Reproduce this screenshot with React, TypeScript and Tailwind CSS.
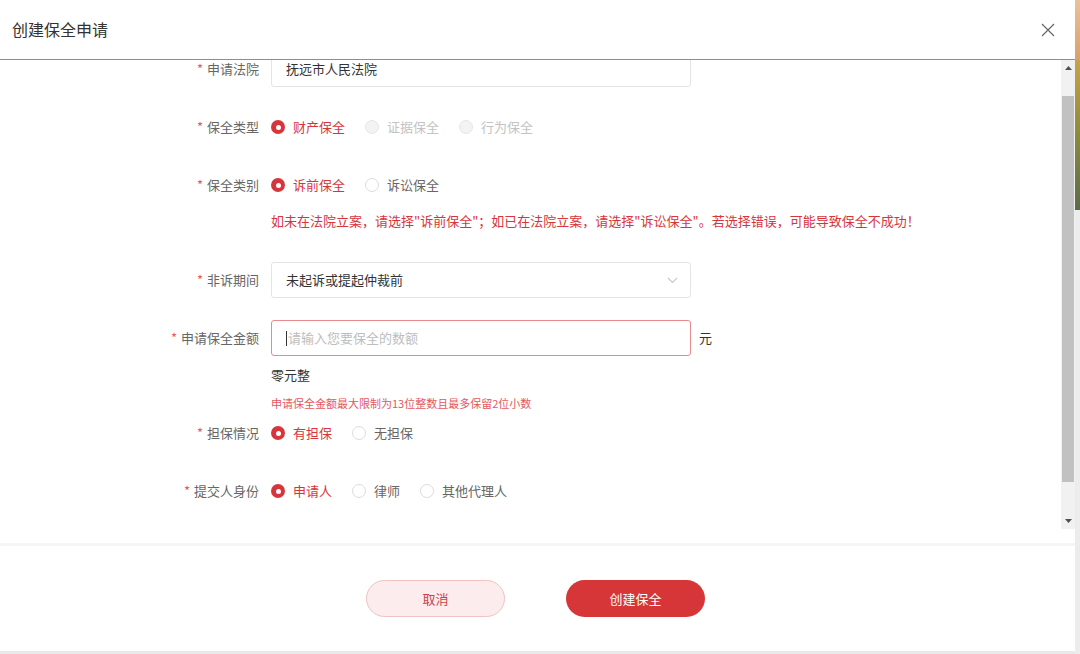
import React from "react";

function Radio({
  label,
  checked = false,
  disabled = false,
}: {
  label: string;
  checked?: boolean;
  disabled?: boolean;
}) {
  return (
    <label className="flex items-center gap-[8px] mr-[20px]">
      {checked ? (
        <span className="w-[14px] h-[14px] rounded-full bg-[#d8353b] flex items-center justify-center">
          <span className="w-[5px] h-[5px] rounded-full bg-white" />
        </span>
      ) : (
        <span
          className={
            disabled
              ? "w-[14px] h-[14px] rounded-full border border-[#e6e6e6] bg-[#f3f3f3]"
              : "w-[14px] h-[14px] rounded-full border border-[#dcdcdc] bg-white"
          }
        />
      )}
      <span
        className={
          checked
            ? "text-[13px] text-[#d8353b]"
            : disabled
            ? "text-[13px] text-[#c3c3c3]"
            : "text-[13px] text-[#666]"
        }
      >
        {label}
      </span>
    </label>
  );
}

function Row({
  label,
  children,
  className = "",
}: {
  label?: string;
  children: React.ReactNode;
  className?: string;
}) {
  return (
    <div className={"flex items-center " + className}>
      <div className="w-[259px] text-right text-[13px] text-[#666] shrink-0">
        {label && (
          <>
            <span className="text-[#e8585d] mr-[4px]">*</span>
            {label}
          </>
        )}
      </div>
      <div className="ml-[12px] flex items-center flex-1">{children}</div>
    </div>
  );
}

export default function App() {
  return (
    <div
      className="w-[1080px] h-[654px] flex bg-white overflow-hidden"
      style={{ fontFamily: '"Noto Sans CJK SC", "Noto Sans", sans-serif' }}
    >
      <div className="w-[1075px] h-full flex flex-col">
        {/* header */}
        <div className="h-[60px] flex items-center justify-between pl-[12px] pr-[20px] border-b border-[#e06a6f] shrink-0">
          <h1 className="text-[16px] text-[#333] mt-[-1px]">创建保全申请</h1>
          <svg width="14" height="14" viewBox="0 0 14 14">
            <path d="M1 1L13 13M13 1L1 13" stroke="#666" strokeWidth="1.2" fill="none" />
          </svg>
        </div>

        {/* scroll body */}
        <div className="h-[469px] flex shrink-0">
          <div className="flex-1 overflow-hidden">
            <div className="mt-[-9px]">
              <Row label="申请法院">
                <div className="w-[420px] h-[36px] border border-[#e4e4e4] rounded-[3px] px-[14px] flex items-center text-[13px] text-[#333]">
                  抚远市人民法院
                </div>
              </Row>
              <Row label="保全类型" className="mt-[22px] h-[36px]">
                <Radio label="财产保全" checked />
                <Radio label="证据保全" disabled />
                <Radio label="行为保全" disabled />
              </Row>
              <Row label="保全类别" className="mt-[22px] h-[36px]">
                <Radio label="诉前保全" checked />
                <Radio label="诉讼保全" />
              </Row>
              <Row className="mt-[8px] h-[20px]">
                <span className="text-[13px] text-[#d8353b]">
                  如未在法院立案，请选择"诉前保全"；如已在法院立案，请选择"诉讼保全"。若选择错误，可能导致保全不成功！
                </span>
              </Row>
              <Row label="非诉期间" className="mt-[31px]">
                <div className="w-[420px] h-[36px] border border-[#e4e4e4] rounded-[3px] pl-[14px] pr-[12px] flex items-center justify-between text-[13px] text-[#333]">
                  <span>未起诉或提起仲裁前</span>
                  <svg width="11" height="7" viewBox="0 0 11 7">
                    <path d="M1 1L5.5 5.5L10 1" stroke="#c8c8c8" strokeWidth="1.1" fill="none" />
                  </svg>
                </div>
              </Row>
              <Row label="申请保全金额" className="mt-[22px]">
                <div className="w-[420px] h-[36px] border border-[#e98a8d] rounded-[3px] pl-[14px] flex items-center text-[13px] text-[#bdbdbd]">
                  <span className="w-px h-[15px] bg-[#333] mr-[1px]" />
                  请输入您要保全的数额
                </div>
                <span className="ml-[8px] text-[13px] text-[#333]">元</span>
              </Row>
              <Row className="mt-[9px] h-[20px]">
                <span className="text-[13px] text-[#333]">零元整</span>
              </Row>
              <Row className="mt-[10px] h-[16px]">
                <span className="text-[11px] text-[#e4575c]">
                  申请保全金额最大限制为13位整数且最多保留2位小数
                </span>
              </Row>
              <Row label="担保情况" className="mt-[4px] h-[36px]">
                <Radio label="有担保" checked />
                <Radio label="无担保" />
              </Row>
              <Row label="提交人身份" className="mt-[22px] h-[36px]">
                <Radio label="申请人" checked />
                <Radio label="律师" />
                <Radio label="其他代理人" />
              </Row>
            </div>
          </div>
          {/* scrollbar */}
          <div className="w-[14px] bg-[#f1f1f1] flex flex-col items-center">
            <div className="h-[36px] w-full flex justify-center pt-[6px]">
              <svg width="7" height="4" viewBox="0 0 7 4">
                <path d="M0 4L3.5 0L7 4Z" fill="#505050" />
              </svg>
            </div>
            <div className="w-[12px] h-[386px] bg-[#c1c1c1]" />
            <div className="flex-1 w-full flex items-end justify-center pb-[6px]">
              <svg width="7" height="4" viewBox="0 0 7 4">
                <path d="M0 0L3.5 4L7 0Z" fill="#505050" />
              </svg>
            </div>
          </div>
        </div>

        {/* footer */}
        <div className="h-[14px] shrink-0" />
        <div className="h-[3px] bg-[#f5f5f5] shrink-0" />
        <div className="flex-1 flex items-start justify-center gap-[61px] pt-[34px] pr-[4px]">
          <button className="w-[139px] h-[37px] rounded-full border border-[#f0c2c4] bg-[#fdeced] text-[13px] text-[#c9434a]">
            取消
          </button>
          <button className="w-[139px] h-[37px] rounded-full bg-[#d63638] text-[13px] text-white">
            创建保全
          </button>
        </div>
        <div className="h-[3px] bg-[#e9e9e9] shrink-0" />
      </div>
      {/* page behind dialog */}
      <div className="w-[5px] h-full flex flex-col">
        <div className="h-[60px] bg-gradient-to-b from-[#e9c29a] to-[#d9a06a]" />
        <div className="h-[150px] bg-gradient-to-b from-[#c8a24a] via-[#8c8a3a] to-[#5b6b4a]" />
        <div className="flex-1 bg-[#ececec]" />
      </div>
    </div>
  );
}
